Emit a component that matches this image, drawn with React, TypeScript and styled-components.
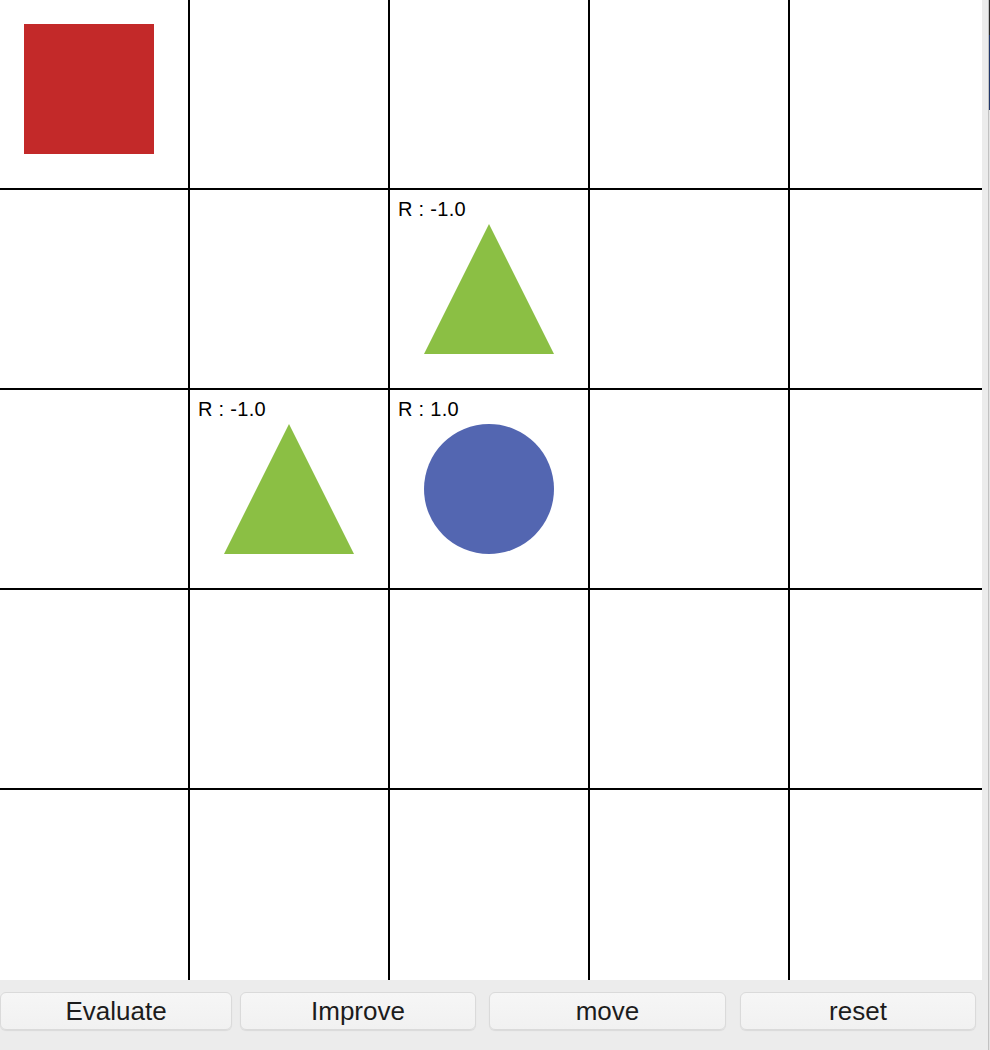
import React from 'react'
import styled, {createGlobalStyle} from 'styled-components'

type Piece = 'agent' | 'trap' | 'goal' | null

interface ICell {
    piece: Piece,
    reward?: string
}

const GlobalStyle = createGlobalStyle`
    html, body {
        margin: 0;
        padding: 0;
        background: #ffffff;
        font-family: "Liberation Sans", Arial, sans-serif;
    }
`

const Frame = styled.div`
    display: flex;
    width: 990px;
    height: 1050px;
    overflow: hidden;
`

const Window = styled.div`
    width: 988px;
    display: flex;
    flex-direction: column;
    background: #ececec;
`

const Edge = styled.div`
    width: 1px;
    border-left: 1px solid #c2c2c2;
    background: linear-gradient(to bottom, #2b2b2b 0 35px, #22386a 35px 110px, #e4e4e4 110px);
`

const Board = styled.div`
    width: 982px;
    height: 980px;
    overflow: hidden;
    background: #ffffff;
`

const Grid = styled.div`
    display: grid;
    grid-template-columns: repeat(5, 200px);
    grid-auto-rows: 200px;
    margin: -11px 0 0 -11px;
`

const Cell = styled.div`
    box-sizing: border-box;
    border: 1px solid #000000;
    display: grid;
`

const Reward = styled.span`
    grid-area: 1 / 1;
    align-self: start;
    justify-self: start;
    padding: 8px 0 0 8px;
    font-size: 20px;
    line-height: 23px;
    letter-spacing: 0.3px;
    color: #000000;
`

const Agent = styled.div`
    grid-area: 1 / 1;
    place-self: center;
    width: 130px;
    height: 130px;
    background: #c32929;
`

const Goal = styled.div`
    grid-area: 1 / 1;
    place-self: center;
    width: 130px;
    height: 130px;
    border-radius: 50%;
    background: #5366b1;
`

const TrapIcon = styled.svg`
    grid-area: 1 / 1;
    place-self: center;
    width: 130px;
    height: 130px;
    display: block;
`

const ButtonBar = styled.div`
    height: 70px;
    display: flex;
    align-items: flex-start;
    padding-top: 12px;
    box-sizing: border-box;
`

const Button = styled.button<{ $offset: number, $width: number }>`
    flex: 0 0 ${p => p.$width}px;
    margin-left: ${p => p.$offset}px;
    height: 38px;
    box-sizing: border-box;
    border: 1px solid #dadada;
    border-radius: 6px;
    background: linear-gradient(to bottom, #f6f6f6, #f1f1f1);
    box-shadow: 0 1px 1px rgba(0, 0, 0, 0.08);
    font-family: "Liberation Sans", Arial, sans-serif;
    font-size: 26px;
    color: #1c1c1c;
    padding: 0;
`

const Trap = () => (
    <TrapIcon viewBox="0 0 130 130">
        <polygon points="65,0 130,130 0,130" fill="#8bbf44"/>
    </TrapIcon>
)

const board: ICell[][] = [
    [{piece: 'agent'}, {piece: null}, {piece: null}, {piece: null}, {piece: null}],
    [{piece: null}, {piece: null}, {piece: 'trap', reward: '-1.0'}, {piece: null}, {piece: null}],
    [{piece: null}, {piece: 'trap', reward: '-1.0'}, {piece: 'goal', reward: '1.0'}, {piece: null}, {piece: null}],
    [{piece: null}, {piece: null}, {piece: null}, {piece: null}, {piece: null}],
    [{piece: null}, {piece: null}, {piece: null}, {piece: null}, {piece: null}],
]

const buttons = [
    {label: 'Evaluate', offset: 0, width: 232},
    {label: 'Improve', offset: 8, width: 236},
    {label: 'move', offset: 13, width: 237},
    {label: 'reset', offset: 14, width: 236},
]

const App = () => {
    return (
        <>
            <GlobalStyle/>
            <Frame>
                <Window>
                    <Board>
                        <Grid>
                            {board.flat().map((cell, i) => (
                                <Cell key={i}>
                                    {cell.reward && <Reward>R : {cell.reward}</Reward>}
                                    {cell.piece === 'agent' && <Agent/>}
                                    {cell.piece === 'trap' && <Trap/>}
                                    {cell.piece === 'goal' && <Goal/>}
                                </Cell>
                            ))}
                        </Grid>
                    </Board>
                    <ButtonBar>
                        {buttons.map(b => (
                            <Button key={b.label} $offset={b.offset} $width={b.width}>{b.label}</Button>
                        ))}
                    </ButtonBar>
                </Window>
                <Edge/>
            </Frame>
        </>
    )
}

export default App
